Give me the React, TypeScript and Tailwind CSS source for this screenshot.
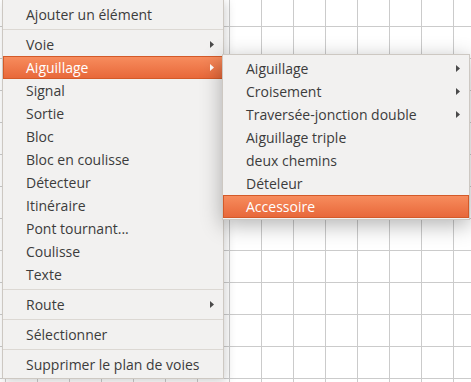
import React from "react";

type Item = { label?: string; sub?: boolean; active?: boolean; sep?: boolean };

const mainItems: Item[] = [
  { label: "Ajouter un élément" },
  { sep: true },
  { label: "Voie", sub: true },
  { label: "Aiguillage", sub: true, active: true },
  { label: "Signal" },
  { label: "Sortie" },
  { label: "Bloc" },
  { label: "Bloc en coulisse" },
  { label: "Détecteur" },
  { label: "Itinéraire" },
  { label: "Pont tournant..." },
  { label: "Coulisse" },
  { label: "Texte" },
  { sep: true },
  { label: "Route", sub: true },
  { sep: true },
  { label: "Sélectionner" },
  { sep: true },
  { label: "Supprimer le plan de voies" },
];

const subItems: Item[] = [
  { label: "Aiguillage", sub: true },
  { label: "Croisement", sub: true },
  { label: "Traversée-jonction double", sub: true },
  { label: "Aiguillage triple" },
  { label: "deux chemins" },
  { label: "Dételeur" },
  { label: "Accessoire", active: true },
];

function Arrow({ light }: { light?: boolean }) {
  return (
    <svg width="4" height="7" viewBox="0 0 4 7" className="shrink-0">
      <polygon points="0,0 4,3.5 0,7" fill={light ? "#ffffff" : "#4a4a4a"} />
    </svg>
  );
}

function MenuList({ items }: { items: Item[] }) {
  return (
    <>
      {items.map((it, i) =>
        it.sep ? (
          <div key={i} className="flex h-[7px] items-center">
            <div className="h-px w-full bg-[#dcd8d3]" />
          </div>
        ) : (
          <div
            key={i}
            className={
              it.active
                ? "flex h-[23px] items-center justify-between border border-[#d35a29] bg-[linear-gradient(to_bottom,#f78c5d,#e8683a)] pl-[22px] pr-[8px] text-white"
                : "flex h-[23px] items-center justify-between border border-transparent pl-[22px] pr-[8px] text-[#3c3c3c]"
            }
          >
            <span>{it.label}</span>
            {it.sub && <Arrow light={it.active} />}
          </div>
        )
      )}
    </>
  );
}

export default function App() {
  return (
    <div className="relative h-[382px] w-[471px] overflow-hidden bg-white bg-[linear-gradient(to_right,#cbcbcb_1px,transparent_1px),linear-gradient(to_bottom,#cbcbcb_1px,transparent_1px)] bg-[size:32px_32px] bg-[position:5px_26px] font-['Open_Sans',sans-serif] text-[14px]">
      <div className="absolute left-[2px] top-[-1px] w-[222px] border border-[#cdc8c2] bg-[#f2f1f0] pt-[3px] pb-[2px] shadow-[2px_3px_10px_rgba(0,0,0,0.18)]">
        <MenuList items={mainItems} />
      </div>
      <div className="absolute left-[222px] top-[54px] w-[248px] border border-[#cdc8c2] bg-[#f2f1f0] pt-[2px] pb-[1px] shadow-[0_5px_20px_rgba(0,0,0,0.3)]">
        <MenuList items={subItems} />
      </div>
    </div>
  );
}
